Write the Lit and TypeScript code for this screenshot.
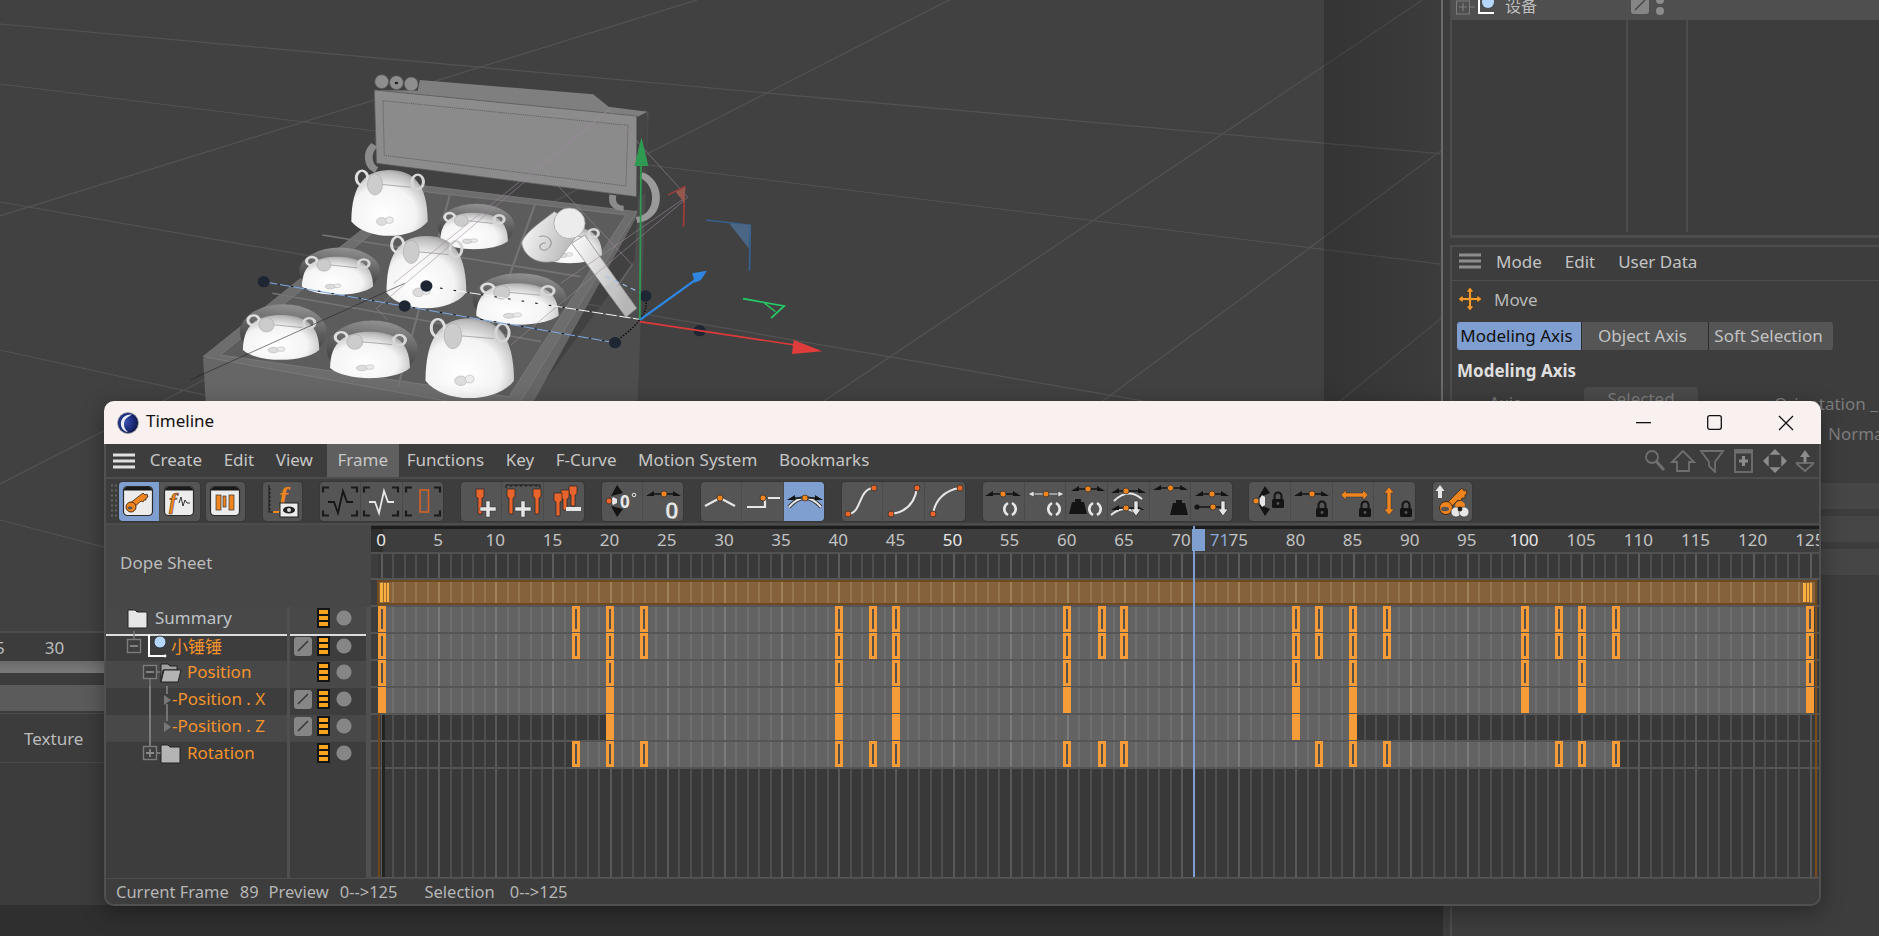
import { LitElement, html, css, svg, nothing } from "lit";
import { customElement } from "lit/decorators.js";

const OR = "#f0841f", RE = "#e8642c", WH = "#e6e6e6", BK = "#141414";
const ball = (x: number, y: number, r = 3, c = OR) =>
  svg`<circle cx=${x} cy=${y} r=${r} fill=${c} stroke="#2a2a2a" stroke-width=".7"/>`;
const bar = (a: number, b: number, y: number, m = (a + b) / 2, c = BK) => svg`
  <path d="M${a + 5} ${y}H${b - 5}" stroke=${c} stroke-width="1.6"/>
  <path d="M${a} ${y + 2}L${a + 8} ${y - 3}V${y + 2}Z M${b} ${y + 2}L${b - 8} ${y - 3}V${y + 2}Z" fill=${c}/>
  ${ball(m, y)}`;
const cycle = (x: number, y: number) => svg`
  <path d="M${x - 2} ${y - 6}C${x - 7} ${y - 3} ${x - 7} ${y + 3} ${x - 2} ${y + 6} M${x + 2} ${y - 6}C${x + 7} ${y - 3} ${x + 7} ${y + 3} ${x + 2} ${y + 6}" fill="none" stroke=${WH} stroke-width="2.6"/>`;
const weight = (x: number, y: number) => svg`
  <path d="M${x - 3} ${y - 8}h6v3h3l3 12h-18l3 -12h3z" fill=${BK}/>`;
const lock = (x: number, y: number) => svg`
  <path d="M${x - 3.5} ${y - 2}v-3a3.5 3.5 0 0 1 7 0v3" fill="none" stroke=${BK} stroke-width="2"/>
  <rect x=${x - 6} y=${y - 2} width="12" height="9" rx="1.5" fill=${BK}/>
  <circle cx=${x} cy=${y + 2.5} r="1.4" fill="#555"/>`;
const downArrow = (x: number, y: number) => svg`
  <path d="M${x - 2} ${y - 8}h4v8h3l-5 7l-5 -7h3z" fill=${WH} stroke="#222" stroke-width=".6"/>`;
const card = (inner: unknown) => svg`
  <rect x="4.5" y="4.5" width="29" height="29" rx="4" fill="#ececec" stroke="#2a2a2a" stroke-width="1.2"/>
  <path d="M5 8.5V8a3 3 0 0 1 3-3H30a3 3 0 0 1 3 3v.5z" fill="#1a1a1a"/>${inner}`;
const keyShape = svg`
  <path d="M10 22L24 11l2 2 2-1 1 3-2 1 0 2-2 0-1 2-2-1-8 7" fill=${OR} stroke="#3a2510" stroke-width=".8"/>
  <circle cx="12" cy="25" r="5" fill=${OR} stroke="#3a2510" stroke-width=".9"/>
  <ellipse cx="11" cy="26" rx="2.5" ry="1.4" fill="#555"/>`;
const brackets = svg`
  <path d="M3 10V5H9 M31 5H37V10 M37 28V33H31 M9 33H3V28" transform="translate(0 .5)" fill="none" stroke="#1b1b1b" stroke-width="2.2"/>`;
const handle = (x: number, top: number, bot: number) => svg`
  <path d="M${x - 4} ${top}h8v8l-2 1v${bot - top - 9}h-4v${-(bot - top - 9)}l-2 -1z" fill=${RE} stroke="#222" stroke-width=".7"/>`;
const plus = (x: number, y: number) => svg`
  <path d="M${x - 2} ${y - 8}h4v6h6v4h-6v6h-4v-6h-6v-4h6z" fill=${WH} stroke="#333" stroke-width=".5"/>`;
const pulse = (c: string) => svg`<path d="M8 20H14L18 31L23 9L27 20H33" fill="none" stroke=${c} stroke-width="1.8"/>`;

const I: Record<string, unknown> = {
  key: card(keyShape),
  fcurve: card(svg`
    <text x="9" y="27" font-family="Liberation Serif" font-style="italic" font-weight="700" font-size="23" fill=${OR} stroke="#3a2510" stroke-width=".5">f</text>
    <path d="M19 21l2-6 2 9 2-6 2 3h3" fill="none" stroke="#333" stroke-width="1"/>`),
  bars: card(svg`
    <rect x="10" y="13" width="5" height="15" fill=${OR} stroke="#333" stroke-width=".7"/>
    <rect x="17" y="14" width="3" height="11" fill=${OR} stroke="#333" stroke-width=".7"/>
    <rect x="23" y="13" width="5" height="15" fill=${OR} stroke="#333" stroke-width=".7"/>`),
  feye: svg`
    <path d="M6 3V30H10 M6 7H8M6 11H8M6 15H8M6 19H8M6 23H8M6 27H8" stroke="#1b1b1b" stroke-width="1.1" fill="none"/>
    <text x="16" y="24" font-family="Liberation Serif" font-style="italic" font-weight="700" font-size="27" fill=${OR}>f</text>
    <path d="M10 30H16" stroke=${OR} stroke-width="2"/>
    <rect x="17" y="21" width="18" height="14" fill="#ececec" stroke="#222"/>
    <ellipse cx="26" cy="28" rx="6" ry="3.6" fill="#222"/><circle cx="26" cy="28" r="2" fill="#ddd"/>`,
  b1: svg`${brackets}${pulse("#161616")}`,
  b2: svg`${brackets}${pulse(WH)}`,
  b3: svg`${brackets}<rect x="17" y="8" width="8.5" height="22" fill="#5a5a5a" stroke="#d3622a" stroke-width="1.6"/>`,
  a1: svg`${handle(19, 7, 32)}${plus(27, 27)}`,
  a2: svg`<path d="M4 6V3H38V6 M9 3v2M14 3v2M19 3v2M24 3v2M29 3v2M34 3v2" stroke="#1b1b1b" fill="none"/>${handle(9, 7, 32)}${handle(35, 7, 32)}${plus(21, 27)}`,
  a3: svg`${handle(29, 4, 24)}${handle(21, 8, 28)}${handle(14, 11, 34)}<path d="M22 27H37" stroke=${WH} stroke-width="4"/>`,
  ang: svg`
    <path d="M15 3L21 11L9 14Z M15 35L21 27L9 24Z" fill=${BK}/>
    <path d="M11 15Q8 19 11 23L15 21V17Z" fill=${WH}/>
    ${ball(7, 19, 3, RE)}
    <text x="18" y="26" font-family="Noto Sans" font-weight="700" font-size="17" fill=${WH}>0</text>
    <circle cx="32" cy="13" r="1.8" fill="none" stroke=${WH}/>`,
  zero: svg`${bar(3, 38, 12, 21, BK)}<text x="22" y="37" font-family="Noto Sans" font-weight="700" font-size="24" fill=${WH} stroke="#333" stroke-width=".4">0</text>`,
  g1: svg`<path d="M4 24L19 16L34 24" fill="none" stroke=${WH} stroke-width="2.2"/>${ball(19, 16)}`,
  g2: svg`<path d="M5 25H23V17 M26 16H38" fill="none" stroke=${WH} stroke-width="2.2"/>${ball(21, 16)}`,
  g3: svg`<path d="M5 25Q21 7 37 25" fill="none" stroke="#333" stroke-width="4"/><path d="M5 25Q21 7 37 25" fill="none" stroke=${WH} stroke-width="2"/>${bar(3, 39, 16, 21)}`,
  h1: svg`<path d="M6 32C20 32 16 6 32 6" fill="none" stroke=${WH} stroke-width="2"/>${ball(6, 32, 3, RE)}${ball(32, 6, 3, RE)}`,
  h2: svg`<path d="M8 32C24 30 32 20 34 6" fill="none" stroke=${WH} stroke-width="2"/>${ball(8, 32, 3, RE)}${ball(34, 6, 3, RE)}`,
  h3: svg`<path d="M8 32C10 18 20 8 35 6" fill="none" stroke=${WH} stroke-width="2"/>${ball(8, 32, 3, RE)}${ball(35, 6, 3, RE)}`,
  i1: svg`${bar(2, 38, 12)}${cycle(27, 27)}`,
  i2: svg`<path d="M8 12H34" stroke=${WH}/><path d="M3 12L9 9V15Z M39 12L33 9V15Z" fill=${WH} stroke="#222" stroke-width=".5"/>${ball(21, 12)}${cycle(29, 27)}`,
  i3: svg`${bar(5, 39, 7)}${weight(12, 25)}${cycle(29, 27)}`,
  i4: svg`<path d="M6 19Q20 5 34 17" fill="none" stroke=${WH} stroke-width="2"/>${bar(3, 38, 9, 18)}<path d="M3 33Q16 22 28 31" fill="none" stroke=${WH} stroke-width="2"/>${bar(3, 36, 26, 18)}${downArrow(28, 27)}`,
  i5: svg`${bar(3, 38, 6)}${weight(29, 26)}`,
  i6: svg`${bar(4, 38, 12)}<path d="M6 25H34" stroke=${BK} stroke-width="1.6"/><circle cx="6" cy="25" r="2.6" fill=${BK}/>${ball(22, 25)}${downArrow(32, 27)}`,
  j1: svg`<path d="M16 4L21 11L9 16Z M16 34L21 27L9 22Z" fill=${BK}/><path d="M13 13Q8 19 13 25L16 23V15Z" fill=${WH}/>${ball(7, 19)}${lock(29, 19)}`,
  j2: svg`${bar(3, 38, 12, 21)}${lock(31, 28)}`,
  j3: svg`<path d="M8 13L13 8V11H30V8L35 13L30 18V15H13V18Z" fill=${OR} stroke="#333" stroke-width=".5"/>${lock(32, 28)}`,
  j4: svg`<path d="M15 5L20 11H17V27H20L15 33L10 27H13V11H10Z" fill=${OR} stroke="#333" stroke-width=".5"/>${lock(32, 28)}`,
  k: svg`
    <path d="M5 16V9H2.5L7 3L11.5 9H9V16Z" fill=${WH}/>
    <path d="M11 24L29 6l2 3 2-1 1 4-2 1v3l-3 0-1 3-3-1-8 8" fill=${OR} stroke="#3a2510" stroke-width=".8"/>
    <circle cx="13" cy="26" r="6.5" fill=${OR} stroke="#3a2510" stroke-width=".9"/><ellipse cx="12" cy="27" rx="4" ry="2.2" fill="#555"/>
    <circle cx="27" cy="24" r="5" fill=${OR}/>
    <circle cx="23" cy="30" r="5" fill=${WH} stroke="#333" stroke-width=".6"/><circle cx="31" cy="30" r="5" fill=${WH} stroke="#333" stroke-width=".6"/><circle cx="27" cy="27" r="2.4" fill="#222"/>`,
};

const GROUPS: { w: number; gap: number; items: { id: string; on?: boolean }[] }[] = [
  { w: 81, gap: 6, items: [{ id: "key", on: true }, { id: "fcurve" }] },
  { w: 39, gap: 18, items: [{ id: "bars" }] },
  { w: 39, gap: 18, items: [{ id: "feye" }] },
  { w: 123, gap: 18, items: [{ id: "b1" }, { id: "b2" }, { id: "b3" }] },
  { w: 123, gap: 18, items: [{ id: "a1" }, { id: "a2" }, { id: "a3" }] },
  { w: 81, gap: 18, items: [{ id: "ang" }, { id: "zero" }] },
  { w: 123, gap: 18, items: [{ id: "g1" }, { id: "g2" }, { id: "g3", on: true }] },
  { w: 123, gap: 18, items: [{ id: "h1" }, { id: "h2" }, { id: "h3" }] },
  { w: 249, gap: 17, items: [{ id: "i1" }, { id: "i2" }, { id: "i3" }, { id: "i4" }, { id: "i5" }, { id: "i6" }] },
  { w: 166, gap: 18, items: [{ id: "j1" }, { id: "j2" }, { id: "j3" }, { id: "j4" }] },
  { w: 39, gap: 0, items: [{ id: "k" }] },
];

const MENU = ["Create", "Edit", "View", "Frame", "Functions", "Key", "F-Curve", "Motion System", "Bookmarks"];

/* Dope-sheet data */
const X0 = 371, PX = 11.43, F0 = 381;
const fx = (f: number) => F0 + f * PX - X0;
const ALL = [0, 17, 20, 23, 40, 43, 45, 60, 63, 65, 80, 82, 85, 88, 100, 103, 105, 108, 125];
const POS = [0, 20, 40, 45, 60, 80, 85, 100, 105, 125];
const TRACKS: { lit: [number, number]; keys: number[]; solid?: boolean }[] = [
  { lit: [-1, 126], keys: ALL },
  { lit: [-1, 126], keys: ALL },
  { lit: [-1, 126], keys: POS },
  { lit: [-1, 126], keys: POS, solid: true },
  { lit: [20, 85], keys: [20, 40, 45, 80, 85], solid: true },
  { lit: [17, 108], keys: [17, 20, 23, 40, 43, 45, 60, 63, 65, 82, 85, 88, 103, 105, 108] },
];
const frames = Array.from({ length: 126 }, (_, i) => i);

const dopeCanvas = () => {
  const W = 1448, H = 354; // x 371..1819, y 525..879
  const ry = (r: number) => 82 + r * 27;
  const ph = Math.round(fx(71)) + 1;
  return svg`
  <svg class="dope" width=${W} height=${H} viewBox="0 0 ${W} ${H}" shape-rendering="crispEdges">
    <rect width=${W} height=${H} fill="#3d3d3d"/>
    <rect x="0" y="1" width=${W} height="3" fill="#1d1d1d"/>
    <rect x="0" y="27" width=${W} height="2" fill="#515151"/>
    <rect x="0" y="29" width=${W} height=${H - 29} fill="#393939"/>
    <rect x="0" y="29" width="7" height="${H - 29}" fill="#3d3d3d"/>
    ${TRACKS.map((t, i) => {
      const a = t.lit[0] < 0 ? 8 : fx(t.lit[0]);
      const b = t.lit[1] > 125 ? 1443 : fx(t.lit[1]);
      return svg`<rect x=${a} y=${ry(i)} width=${b - a} height="25" fill="#636363"/>`;
    })}
    ${frames.map((f) => {
      const x = Math.round(fx(f));
      const five = f % 5 === 0;
      return svg`
        <rect x=${x} y="29" width="2" height="26" fill=${five ? "#5c5c5c" : "#4f4f4f"}/>
        <rect x=${x} y="82" width="2" height=${H - 82} fill=${five ? "#595959" : "#4e4e4e"}/>
        ${TRACKS.map((t, i) =>
          f >= t.lit[0] && f <= t.lit[1]
            ? svg`<rect x=${x} y=${ry(i)} width="2" height="25" fill=${five ? "#7a7a7a" : "#6f6f6f"}/>`
            : nothing
        )}`;
    })}
    ${[0, 1, 2, 3, 4, 5, 6].map((r) => svg`<rect x="0" y=${ry(r) - 2} width=${W} height="2" fill="#555"/>`)}
    <rect x="0" y="53" width=${W} height="2" fill="#555"/>
    <rect x="0" y=${H - 2} width=${W} height="2" fill="#555"/>
    <rect x="7" y="55" width="2" height=${H - 57} fill="#6e481c"/>
    <rect x="11" y=${ry(4)} width="3" height="25" fill="#222"/>
    <rect x="11" y=${ry(5)} width="3" height=${H - 2 - ry(5)} fill="#222"/>
    <rect x="1444" y="55" width="2" height=${H - 57} fill="#7a4e1c"/>
    <rect x="6" y="55" width="1440" height="25" fill="#6f4a1e"/>
    <rect x="8" y="57" width="1436" height="21" fill="#86623c"/>
    ${frames.map((f) => svg`<rect x=${Math.round(fx(f))} y="57" width="2" height="21" fill=${f % 5 === 0 ? "#a08259" : "#947550"}/>`)}
    ${[9, 1432].map((x) => svg`<rect x=${x} y="58" width="9" height="19" fill="#f9b040"/>
      <rect x=${x + 3} y="58" width="1" height="19" fill="#9b6a2c"/><rect x=${x + 6} y="58" width="1" height="19" fill="#9b6a2c"/>`)}
    ${TRACKS.map((t, i) =>
      t.keys.map((f) => {
        const kx = Math.round(fx(f) - 3.5);
        return svg`<rect x=${kx} y=${ry(i) - 1} width="8" height="26" fill="#f59b38"/>
          ${t.solid ? nothing : svg`<rect x=${kx + 3} y=${ry(i) + 2} width="2" height="20" fill="#55504a"/>`}`;
      })
    )}
    <rect x="0" y="4" width="12" height="23" fill="#2f2f2f"/>
    <rect x=${ph - 1} y="1" width="2" height=${H - 3} fill="#7f9fd0"/>
    <rect x=${ph - 2} y="4" width="13" height="22" fill="#7f9fd0"/>
  </svg>`;
};

/* 3D viewport — drawn in a 680x340 reference crop stretched onto (190,60) */
const mouse = (cx: number, top: number, rx: number, bottom: number, hole = true) => {
  const h = bottom - top;
  const eyeX = cx - rx * 0.38, eyeY = top + h * 0.22;
  return svg`
    ${hole ? svg`<ellipse cx=${cx + 5} cy=${top + h * 0.38} rx=${rx * 1.14} ry=${h * 0.62} fill="url(#hole)"/>` : nothing}
    <path d="M${cx - rx} ${bottom - h * 0.22}C${cx - rx} ${top + h * 0.2} ${cx - rx * 0.6} ${top} ${cx} ${top}C${cx + rx * 0.6} ${top} ${cx + rx} ${top + h * 0.2} ${cx + rx} ${bottom - h * 0.22}C${cx + rx * 0.6} ${bottom + h * 0.07} ${cx - rx * 0.6} ${bottom + h * 0.07} ${cx - rx} ${bottom - h * 0.22}Z" fill="url(#dome)"/>
    <ellipse cx=${cx - rx * 0.72} cy=${top + h * 0.12} rx=${rx * 0.15} ry=${h * 0.11} fill="none" stroke="#dedede" stroke-width="7"/>
    <ellipse cx=${cx + rx * 0.74} cy=${top + h * 0.18} rx=${rx * 0.15} ry=${h * 0.11} fill="none" stroke="#d6d6d6" stroke-width="7"/>
    <ellipse cx=${eyeX} cy=${eyeY} rx=${rx * 0.2} ry=${h * 0.16} fill="url(#eye)" stroke="#8d8d8d"/>
    <path d="M${eyeX + rx * 0.2} ${eyeY}L${cx + rx * 0.55} ${eyeY + 8}" stroke="#9a9a9a" stroke-width="2"/>
    <ellipse cx=${cx - rx * 0.2} cy=${bottom - h * 0.22} rx=${rx * 0.14} ry=${h * 0.06} fill="#dcdcdc" stroke="#999"/>
    <ellipse cx=${cx} cy=${bottom - h * 0.24} rx=${rx * 0.1} ry=${h * 0.05} fill="#ececec" stroke="#999"/>`;
};

const sceneSvg = () => {
  const A: [number, number][] = [[24, 0.09], [84, 0.125], [202, 0.174], [350, 0.22], [520, 0.26]];
  const B: [number, number][] = [[216, 0.31], [484, 0.51], [953, 0.67], [1217, 0.74], [1500, 0.82]];
  return svg`
  <svg class="scene" width="1443" height="631" viewBox="0 0 1443 631">
    <defs>
      <radialGradient id="dome" cx=".42" cy=".68" r=".78"><stop offset="0" stop-color="#fff"/><stop offset=".55" stop-color="#f4f4f4"/><stop offset=".82" stop-color="#bdbdbd"/><stop offset="1" stop-color="#777"/></radialGradient>
      <linearGradient id="hole" x1=".5" y1="0" x2=".3" y2="1"><stop offset="0" stop-color="#8f8f8f"/><stop offset=".45" stop-color="#5c5c5c"/><stop offset="1" stop-color="#2e2e2e"/></linearGradient>
      <pattern id="eye" width="5" height="3" patternUnits="userSpaceOnUse"><rect width="5" height="3" fill="#ddd"/><rect width="5" height="1" fill="#aaa"/></pattern>
      <linearGradient id="band" x1="0" y1="0" x2="1" y2="0"><stop offset="0" stop-color="#000" stop-opacity=".2"/><stop offset="1" stop-color="#000" stop-opacity=".08"/></linearGradient>
      <linearGradient id="hgrad" x1="0" y1="0" x2="1" y2=".3"><stop offset="0" stop-color="#fdfdfd"/><stop offset="1" stop-color="#b5b5b5"/></linearGradient>
    </defs>
    <rect width="1443" height="631" fill="#414141"/>
    ${A.map(([c, s]) => svg`<line x1="0" y1=${c} x2="1443" y2=${c + s * 1443} stroke="#535353" stroke-width="1.2"/>`)}
    ${B.map(([c, s]) => svg`<line x1="0" y1=${c} x2="1443" y2=${c - s * 1443} stroke="#535353" stroke-width="1.2"/>`)}
    <rect x="1324" y="0" width="117" height="631" fill="url(#band)"/>
    <rect x="1441" y="0" width="2" height="631" fill="#6a6a6a"/>
    <g transform="translate(190 60) scale(.4337 .3333)">
      <path d="M1025 600L1045 150L1058 155L1030 1100H740Z" fill="#4d4d4d"/>
      <path d="M30 895L40 1100H760L1030 470V450Z" fill="#666"/>
      <path d="M30 890L525 375L1030 455L745 1060Z" fill="#6d6d6d" stroke="#7d7d7d" stroke-width="2"/>
      <path d="M70 885L540 395L1005 465L735 1010Z" fill="#5c5c5c" stroke="#888" stroke-width="1.5"/>
      <path d="M305 525L900 650 M190 700L810 845 M600 400L480 980 M795 435L650 960" stroke="#747474" stroke-width="5" fill="none"/>

      <ellipse cx="442" cy="65" rx="16" ry="21" fill="#8e8e8e" stroke="#555" stroke-width="2"/>
      <ellipse cx="476" cy="68" rx="16" ry="21" fill="#8e8e8e" stroke="#555" stroke-width="2"/><circle cx="476" cy="69" r="4" fill="#222"/>
      <ellipse cx="510" cy="72" rx="16" ry="21" fill="#8e8e8e" stroke="#555" stroke-width="2"/>
      <path d="M530 60L930 103L965 140L1055 155V170L1030 170L425 90L525 92Z" fill="#7f7f7f"/>
      <path d="M425 90L1030 168L1030 410L430 310Z" fill="#8c8c8c" stroke="#5a5a5a" stroke-width="2"/>
      <path d="M445 122L1010 196L1005 378L448 286Z" fill="#8b8b8b" stroke="#4a4a4a" stroke-width="1.6" stroke-dasharray="3 2"/>
      <path d="M1032 170L1055 155L1052 400L1030 410Z" fill="#444"/>
      <path d="M425 255C405 280 410 320 430 330" fill="none" stroke="#8b8b8b" stroke-width="18"/>
      <path d="M1040 345C1085 365 1090 470 1030 480" fill="none" stroke="#9a9a9a" stroke-width="18"/>
      <path d="M975 405C970 435 985 445 1000 445" fill="none" stroke="#8b8b8b" stroke-width="16"/>

      ${mouse(460, 330, 88, 528, false)}
      ${mouse(655, 458, 78, 568)}
      ${mouse(340, 590, 82, 705)}
      ${mouse(875, 500, 75, 610, false)}
      ${mouse(545, 528, 92, 745, false)}
      ${mouse(755, 670, 95, 795)}
      ${mouse(210, 765, 88, 900)}
      ${mouse(415, 815, 92, 955)}
      ${mouse(645, 775, 102, 1015, false)}

      <g>
        <path d="M880 550L910 525L1030 745L1005 772Z" fill="url(#hgrad)" stroke="#8a8a8a" stroke-width="2"/>
        <path d="M955 680L975 665L990 690L968 705Z" fill="#c4c4c4"/>
        <path d="M840 455L905 505L850 600C805 620 770 590 765 550C770 520 805 490 840 455Z" fill="url(#hgrad)" stroke="#9a9a9a" stroke-width="2"/>
        <ellipse cx="875" cy="490" rx="36" ry="46" fill="#ececec" stroke="#a5a5a5" stroke-width="2"/>
        <path d="M805 530C830 520 845 555 820 570C805 575 800 550 820 548" fill="none" stroke="#9c9c9c" stroke-width="3"/>
      </g>

      <g fill="none" stroke="#9d8a9d" stroke-width="1.5" vector-effect="non-scaling-stroke">
        <path d="M965 150L1148 412L740 855 M965 150L430 745L455 780 M1140 415L855 670 M825 345L1020 615L985 680 M965 150L470 670"/>
      </g>
      <path d="M170 665L980 848" stroke="#7fa8e0" stroke-width="3" fill="none"/>
      <path d="M170 665L980 848" stroke="#111" stroke-width="3" stroke-dasharray="6 26" fill="none"/>
      <path d="M545 678L1035 778" stroke="#f4f4f4" stroke-width="3" fill="none"/>
      <path d="M545 678L1035 778" stroke="#111" stroke-width="3" stroke-dasharray="6 26" fill="none"/>
      <path d="M960 650L1050 705" stroke="#9fc6ef" stroke-width="3" stroke-dasharray="12 10" fill="none"/>
      <path d="M1050 720C1060 760 1020 810 985 840" stroke="#111" stroke-width="4" stroke-dasharray="4 4" fill="none"/>
      <path d="M495 670L0 960" stroke="#222" stroke-width="1.5" fill="none"/>
      ${[[170, 665], [495, 738], [545, 678], [980, 848], [1050, 708], [1175, 812]].map(
        ([x, y]) => svg`<ellipse cx=${x} cy=${y} rx="14" ry="17" fill="#1e2633"/>`
      )}

      <path d="M1037 780L1040 300" stroke="#2f9a52" stroke-width="4"/>
      <path d="M1041 232L1025 318H1057Z" fill="#2f9a52"/>
      <path d="M1037 780L1165 660" stroke="#2e86e0" stroke-width="6"/>
      <path d="M1192 632L1158 640L1164 668L1178 660Z" fill="#2e86e0"/>
      <path d="M1037 785L1395 855" stroke="#dc3a3a" stroke-width="5"/>
      <path d="M1458 874L1392 840L1388 882Z" fill="#e03c3c"/>
      <path d="M1102 405L1140 380L1138 500" fill="none" stroke="#a03c38" stroke-width="4"/>
      <path d="M1120 395L1142 382L1140 430Z" fill="#94584f"/>
      <path d="M1190 480L1292 495L1290 632" fill="none" stroke="#35608f" stroke-width="4"/>
      <path d="M1243 490L1292 495L1288 565Z" fill="#4b6585"/>
      <path d="M1275 716L1370 738L1340 774" fill="none" stroke="#26c765" stroke-width="5"/>
      <path d="M1325 730L1350 755" stroke="#26c765" stroke-width="4"/>
    </g>
  </svg>`;
};

const rowSvg = (w: number, inner: unknown) =>
  html`<svg class="rowsvg" width=${w} height="27" viewBox="0 0 ${w} 27">${inner}</svg>`;
const box = (x: number, plusSign: boolean) => svg`
  <rect x=${x + 0.5} y="6.5" width="13" height="13" fill="#3e3e3e" stroke="#7c7c7c" stroke-width="1.4"/>
  <path d="M${x + 3} 13H${x + 11}${plusSign ? `M${x + 7} 9V17` : ""}" stroke="#8a8a8a" stroke-width="1.8"/>`;
const folder = (x: number, c = "#b4b4b4") => svg`
  <path d="M${x} 23V5h7l2 2h10v16z" fill=${c} stroke="#222" stroke-width="1"/>`;
const openFolder = (x: number) => svg`
  <path d="M${x} 23V5h7l2 2h7v4h-14z" fill="#9f9f9f" stroke="#222"/>
  <path d="M${x} 23L${x + 3} 11H${x + 20}L${x + 17} 23Z" fill="#b4b4b4" stroke="#222"/>`;
const nullObj = (x: number) => svg`
  <path d="M${x + 1} 3V23H${x + 17}" fill="none" stroke="#fff" stroke-width="2"/>
  <circle cx=${x + 12} cy="9" r="6" fill="#b5d6ff" stroke="#222" stroke-width=".8"/>
  <circle cx=${x + 17} cy="23" r="1.4" fill="#fff"/><circle cx=${x + 1} cy="3" r="1.2" fill="#fff"/>`;

const ROWS = [
  { label: "Summary", cls: "gray", w: 49, alt: true, tag: false,
    g: svg`${folder(22, "#e6e6e6")}` },
  { label: "小锤锤", cls: "or", w: 65, alt: false, tag: true, line: true,
    g: svg`<path d="M28 -2V7" stroke="#7c7c7c" stroke-width="1.4"/>${box(21, false)}${nullObj(42)}` },
  { label: "Position", cls: "or", w: 81, alt: true, tag: false,
    g: svg`<path d="M44 20V27M51 13H56" stroke="#7c7c7c" stroke-width="1.4"/>${box(37, false)}${openFolder(55)}` },
  { label: "-Position . X", cls: "or", w: 66, alt: false, tag: true,
    g: svg`<path d="M44 0V27" stroke="#8a8a8a" stroke-width="1.6"/><path d="M61 0V8M61 18V27" stroke="#808080" stroke-width="1.6"/><path d="M58 9L65 14L58 19Z" fill="#777"/>` },
  { label: "-Position . Z", cls: "or", w: 66, alt: true, tag: true,
    g: svg`<path d="M44 0V27" stroke="#8a8a8a" stroke-width="1.6"/><path d="M61 0V8" stroke="#808080" stroke-width="1.6"/><path d="M58 9L65 14L58 19Z" fill="#777"/>` },
  { label: "Rotation", cls: "or", w: 81, alt: false, tag: false,
    g: svg`<path d="M44 0V7M51 13H55" stroke="#8a8a8a" stroke-width="1.6"/>${box(37, true)}${folder(55)}` },
];

const solo = html`<svg class="solo" width="13" height="20" viewBox="0 0 13 20">
  <rect width="13" height="20" fill="#141414"/>
  <rect x="2" y="2" width="9" height="4" fill="#f7a51e"/><rect x="2" y="8" width="9" height="4" fill="#f7a51e"/><rect x="2" y="14" width="9" height="4" fill="#f7a51e"/></svg>`;
const tagIcon = html`<svg width="18" height="19" viewBox="0 0 18 19"><rect width="18" height="19" rx="3" fill="#858585"/><path d="M4 14L14 4" stroke="#333" stroke-width="1.4"/></svg>`;
const dot = html`<svg width="16" height="16" viewBox="0 0 16 16"><circle cx="8" cy="8" r="7.6" fill="#868686"/></svg>`;

@customElement("app-root")
export class AppRoot extends LitElement {
  static styles = css`
    :host { display: block; width: 1879px; height: 936px; position: relative; overflow: hidden; background: #3a3a3a;
      font-family: "Noto Sans", "Noto Sans CJK SC", sans-serif; color: #bdbdbd; }
    .page { display: grid; grid-template-columns: 1443px 436px; height: 936px; }
    .leftcol { display: flex; flex-direction: column; height: 936px; overflow: hidden; }
    .scene { display: block; flex: none; }
    .lowtl { flex: none; height: 274px; background: #3c3c3c; border-top: 2px solid #4d4d4d; box-sizing: border-box; display: flex; flex-direction: column; }
    .lowruler { height: 28px; display: flex; align-items: center; gap: 40px; font-size: 17px; color: #bcbcbc; }
    .lowruler span:first-child { margin-left: -5px; }
    .lowslider { height: 12px; background: linear-gradient(#6b6b6b, #7a7a7a); flex: none; }
    .lowbar { height: 26px; margin-top: 12px; background: #5b5b5b; flex: none; }
    .lowtex { height: 48px; margin-top: 2px; border-top: 1px solid #4a4a4a; border-bottom: 1px solid #4a4a4a; padding-left: 24px; display: flex; align-items: center; font-size: 17px; color: #bbb; }
    .under { flex: none; height: 31px; background: #2f2f2f; }

    .right { background: #3d3d3d; display: flex; flex-direction: column; height: 936px; overflow: hidden; padding-left: 7px; box-sizing: border-box; }
    .om { height: 238px; flex: none; border-left: 2px solid #4c4c4c; border-bottom: 3px solid #4c4c4c; box-sizing: border-box; display: flex; flex-direction: column; }
    .omrow { height: 20px; flex: none; background: #4f4f4f; display: flex; align-items: flex-end; overflow: hidden; }
    .omrow svg { flex: none; display: block; }
    .omrow span { font-size: 16px; line-height: 20px; color: #bcbcbc; position: relative; top: -4px; width: 100px; flex: none; }
    .omtag { margin-left: 26px; }
    .omcols { flex: 1; display: grid; grid-template-columns: 174px 2px 58px 2px 1fr; }
    .omcols i { background: #4c4c4c; margin-bottom: 3px; }
    .att { margin-top: 7px; border-top: 2px solid #4c4c4c; border-left: 2px solid #4c4c4c; flex: 1; display: flex; flex-direction: column; }
    .attmenu { height: 28px; flex: none; display: flex; align-items: center; border-bottom: 1px solid #4f4f4f; font-size: 17px; color: #c3c3c3; padding-bottom: 5px; }
    .attmenu svg { margin: 0 15px 0 7px; }
    .attmenu span { margin-right: 23px; }
    .move { height: 41px; flex: none; display: flex; align-items: center; gap: 11px; padding: 0 0 5px 5px; font-size: 17px; color: #b8b8b8; box-sizing: border-box; }
    .tabs { display: grid; grid-template-columns: 124px 126px 124px; margin-left: 5px; width: 376px; height: 28px; background: #2c2c2c; border-radius: 3px; gap: 1px; flex: none; }
    .tabs span { background: #555; color: #c2c2c2; font-size: 17px; display: flex; align-items: center; justify-content: center; white-space: nowrap; padding: 0 5px 2px 0; box-sizing: border-box; }
    .tabs span.on { background: #7f9fd0; color: #111; }
    .tabs span:first-child { border-radius: 3px 0 0 3px; }
    .tabs span:last-child { border-radius: 0 3px 3px 0; }
    .atthead { margin: 9px 0 0 5px; font-size: 17px; font-weight: 700; color: #dfdfdf; height: 24px; line-height: 24px; flex: none; }
    .fields { position: relative; flex: 1; color: #7b7b7b; font-size: 17px; }
    .fields .a { position: absolute; left: 37px; top: 8px; }
    .fields .b { position: absolute; left: 132px; top: 4px; width: 114px; height: 26px; background: #4a4a4a; border-radius: 3px; text-align: center; }
    .fields .c { position: absolute; left: 322px; top: 9px; white-space: nowrap; }
    .fields .d { position: absolute; left: 376px; top: 39px; white-space: nowrap; }
    .fields .r { position: absolute; left: 300px; width: 136px; height: 26px; background: #464646; border-right: 3px solid #5f7faa; box-sizing: border-box; }
    .fields .r1 { top: 100px; } .fields .r2 { top: 133px; } .fields .r3 { top: 166px; }

    .win { position: absolute; left: 104px; top: 401px; width: 1717px; height: 505px; display: flex; flex-direction: column;
      background: #3d3d3d; border: 2px solid #505050; border-top: none; border-radius: 10px; box-shadow: 0 6px 22px rgba(0,0,0,.35); box-sizing: border-box; }
    .title { height: 43px; flex: none; background: #f9f0f0; border-radius: 10px 10px 0 0; margin: 0 -2px; display: flex; align-items: center; color: #111; font-size: 17px; padding-left: 13px; }
    .title .t { margin-left: 7px; flex: 1; padding-bottom: 5px; }
    .ctl { width: 71px; display: flex; justify-content: center; align-items: center; }
    .title svg { display: block; }
    .menu { height: 33px; flex: none; display: flex; align-items: stretch; border-bottom: 2px solid #4c4c4c; padding-left: 7px; font-size: 17px; color: #c6c6c6; }
    .menu .burger { align-self: center; margin-right: 4px; }
    .menu span { display: flex; align-items: center; padding: 0 10.8px 3px; white-space: nowrap; }
    .menu span.on { background: #5f5f5f; margin-left: 3px; margin-right: -3px; }
    .menu .tools { margin-left: auto; display: flex; align-items: center; padding-right: 2px; }
    .toolbar { height: 46px; flex: none; display: flex; align-items: center; padding-left: 4px; border-bottom: 2px solid #4c4c4c; box-sizing: border-box; }
    .grip { width: 8px; height: 36px; margin-right: 1px; background-image: radial-gradient(circle, #666 1px, transparent 1.2px); background-size: 4px 5px; flex: none; }
    .grp { display: flex; height: 39px; border-radius: 4px; background: #555; overflow: hidden; box-shadow: 0 0 0 1px #383838; flex: none; }
    .btn { flex: 1; height: 39px; border-left: 1px solid #4a4a4a; box-sizing: border-box; min-width: 0; }
    .btn:first-child { border-left: none; }
    .btn.on { background: #7f9fd0; }
    .btn svg { display: block; }
    .mainrow { flex: 1; display: flex; min-height: 0; }
    .leftp { width: 265px; flex: none; display: flex; flex-direction: column; background: #3d3d3d; }
    .dshead { height: 82px; flex: none; background: #474747; display: flex; align-items: center; padding-left: 14px; font-size: 17px; color: #bcbcbc; box-sizing: border-box; padding-bottom: 7px; }
    .cols { flex: 1; display: flex; }
    .names { width: 184px; flex: none; border-right: 3px solid #4f4f4f; box-sizing: border-box; }
    .layers { width: 81px; flex: none; border-right: 5px solid #505050; box-sizing: border-box; }
    .row { height: 27px; display: flex; align-items: center; font-size: 17px; white-space: nowrap; box-sizing: border-box; padding-bottom: 5px; }
    .row span { margin-bottom: 2px; }
    .row.alt { background: #484848; }
    .row.line { border-top: 2px solid #dcdcdc; }
    .row.or { color: #f2932e; }
    .row.gray { color: #bfc3c7; }
    .rowsvg { flex: none; overflow: visible; display: block; margin: -3px 0; }
    .lrow { height: 27px; display: grid; grid-template-columns: 18px 13px 16px; column-gap: 5px; align-items: center; padding: 0 0 5px 4px; box-sizing: border-box; }
    .lrow.alt { background: #484848; }
    .lrow.line { border-top: 2px solid #dcdcdc; }
    .lrow > :nth-child(3) { margin-left: 1px; }
    .dopewrap { position: relative; flex: 1; min-width: 0; overflow: hidden; }
    .dope { display: block; }
    .rlabels { position: absolute; left: 0; top: 6px; width: 100%; height: 0; font-size: 17px; color: #c3c3c3; }
    .rlabels b { position: absolute; font-weight: 400; transform: translateX(-50%); line-height: 1; white-space: nowrap; }
    .rlabels b.hi { color: #e8e8e8; }
    .rlabels b.ph { color: #8aa9d8; }
    .status { height: 25px; flex: none; display: flex; align-items: center; padding-left: 10px; font-size: 16.5px; color: #b5b5b5; white-space: pre; border-top: 1px solid #4c4c4c; background: #3d3d3d; border-radius: 0 0 9px 9px; }
    .status .m1 { margin-left: 11px; } .status .m2 { margin-left: 10px; } .status .m3 { margin-left: 27px; } .status .m4 { margin-left: 15px; }
  `;

  render() {
    const rl = [] as number[];
    for (let f = 0; f <= 125; f += 5) rl.push(f);
    return html`
      <div class="page">
        <div class="leftcol">
          ${sceneSvg()}
          <div class="lowtl">
            <div class="lowruler"><span>5</span><span>30</span></div>
            <div class="lowslider"></div>
            <div class="lowbar"></div>
            <div class="lowtex">Texture</div>
          </div>
          <div class="under"></div>
        </div>
        <div class="right">
          <div class="om">
            <div class="omrow">
              <svg width="53" height="20" viewBox="0 0 53 20">
                <rect x="4.5" y="1" width="13" height="13" fill="none" stroke="#7c7c7c"/>
                <path d="M7 7H15M11 3V11M18 7H23" stroke="#7c7c7c" stroke-width="1.2"/>
                <path d="M27 -2V13H42" fill="none" stroke="#fff" stroke-width="2"/>
                <circle cx="36" cy="2" r="6" fill="#b5d6ff"/>
              </svg>
              <span>设备</span>
              <svg class="omtag" width="40" height="20" viewBox="0 0 40 20"><rect x="0" y="-4" width="18" height="18" rx="3" fill="#858585"/><path d="M4 10L14 0" stroke="#444" stroke-width="1.4"/><circle cx="29" cy="11" r="4" fill="#8c8c8c"/><circle cx="29" cy="0" r="4" fill="#8c8c8c"/></svg>
            </div>
            <div class="omcols"><div></div><i></i><div></div><i></i><div></div></div>
          </div>
          <div class="att">
            <div class="attmenu">
              <svg width="22" height="16" viewBox="0 0 22 16"><path d="M0 2H22M0 8H22M0 14H22" stroke="#8e8e8e" stroke-width="3"/></svg>
              <span>Mode</span><span>Edit</span><span>User Data</span>
            </div>
            <div class="move">
              <svg width="26" height="26" viewBox="0 0 26 26"><path d="M13 1L17 6H14.5V11.5H20V9L25 13L20 17V14.5H14.5V20H17L13 25L9 20H11.5V14.5H6V17L1 13L6 9V11.5H11.5V6H9Z" fill="#f39a2e" stroke="#2a2a2a" stroke-width=".7"/></svg>
              <span>Move</span>
            </div>
            <div class="tabs"><span class="on">Modeling Axis</span><span>Object Axis</span><span>Soft Selection</span></div>
            <div class="atthead">Modeling Axis</div>
            <div class="fields">
              <span class="a">Axis</span>
              <span class="b">Selected</span>
              <span class="c">Orientation _</span>
              <span class="d">Normal</span>
              <span class="r r1"></span><span class="r r2"></span><span class="r r3"></span>
            </div>
          </div>
        </div>
      </div>

      <div class="win">
        <div class="title">
          <svg width="22" height="22" viewBox="0 0 22 22">
            <defs><radialGradient id="c4d" cx=".4" cy=".45" r=".65"><stop offset="0" stop-color="#3a4fae"/><stop offset=".6" stop-color="#1a2a78"/><stop offset="1" stop-color="#0b1030"/></radialGradient></defs>
            <circle cx="11" cy="11" r="10.5" fill="url(#c4d)" stroke="#aaa" stroke-width=".8"/>
            <path d="M15 2.5C8 2 3 7 4 13C4.5 17 8 20 11 20C7 17 6 12 8 8C10 5 13 4 15 2.5Z" fill="#e9edf5"/>
          </svg>
          <span class="t">Timeline</span>
          <div class="ctl"><svg width="15" height="2"><rect width="15" height="1.3" fill="#111"/></svg></div>
          <div class="ctl"><svg width="15" height="15" viewBox="0 0 15 15"><rect x=".7" y=".7" width="13.6" height="13.6" rx="2" fill="none" stroke="#111" stroke-width="1.3"/></svg></div>
          <div class="ctl"><svg width="16" height="16" viewBox="0 0 16 16"><path d="M1 1L15 15M15 1L1 15" stroke="#111" stroke-width="1.3"/></svg></div>
        </div>
        <div class="menu">
          <svg class="burger" width="22" height="16" viewBox="0 0 22 16"><path d="M0 2H22M0 8H22M0 14H22" stroke="#e0e0e0" stroke-width="3"/></svg>
          ${MENU.map((m) => html`<span class=${m === "Frame" ? "on" : ""}>${m}</span>`)}
          <div class="tools">
            <svg width="172" height="24" viewBox="0 0 172 24" fill="none" stroke="#6f6f6f" stroke-width="1.8">
              <circle cx="7" cy="8" r="6"/><path d="M11 12L19 21" stroke-width="3"/>
              <path d="M38 2L27 13H32V22H44V13H49Z"/>
              <path d="M56 2H78L70 13V23L64 17V13Z"/>
              <rect x="90" y="1" width="17" height="22"/><path d="M90 3H107" stroke-width="3"/><path d="M98.5 7V17M94 12H103" stroke="#8c8c8c" stroke-width="3"/>
              <path d="M130 1L134 5H126ZM130 23L134 19H126ZM119 12L123 8V16ZM141 12L137 8V16Z" fill="#8c8c8c" stroke="#8c8c8c" stroke-width="1.4"/>
              <path d="M160 1L165 8H155Z" fill="#8c8c8c" stroke="none"/><path d="M160 8V15" stroke="#8c8c8c" stroke-width="3"/><path d="M151 14L160 22L169 14" /><path d="M151 14H169"/>
            </svg>
          </div>
        </div>
        <div class="toolbar">
          <div class="grip"></div>
          ${GROUPS.map(
            (g) => html`<div class="grp" style="width:${g.w}px;margin-right:${g.gap}px">
              ${g.items.map(
                (b) => html`<div class="btn ${b.on ? "on" : ""}"><svg width="41" height="39" viewBox="0 0 41 39">${I[b.id]}</svg></div>`
              )}
            </div>`
          )}
        </div>
        <div class="mainrow">
          <div class="leftp">
            <div class="dshead">Dope Sheet</div>
            <div class="cols">
              <div class="names">
                ${ROWS.map(
                  (r) => html`<div class="row ${r.cls} ${r.alt ? "alt" : ""} ${r.line ? "line" : ""}">
                    ${rowSvg(r.w, r.g)}<span>${r.label}</span>
                  </div>`
                )}
              </div>
              <div class="layers">
                ${ROWS.map(
                  (r) => html`<div class="lrow ${r.alt ? "alt" : ""} ${r.line ? "line" : ""}">
                    ${r.tag ? tagIcon : html`<span></span>`}${solo}${dot}
                  </div>`
                )}
              </div>
            </div>
          </div>
          <div class="dopewrap">
            ${dopeCanvas()}
            <div class="rlabels">
              ${rl.map(
                (f) => html`<b class=${f % 50 === 0 ? "hi" : ""} style="left:${fx(f).toFixed(1)}px">${f}</b>`
              )}
              <b class="ph" style="left:${(fx(71) + 27).toFixed(1)}px">71</b>
            </div>
          </div>
        </div>
        <div class="status"><span>Current Frame</span><span class="m1">89</span><span class="m2">Preview</span><span class="m1">0--&gt;125</span><span class="m3">Selection</span><span class="m4">0--&gt;125</span></div>
      </div>
    `;
  }
}
